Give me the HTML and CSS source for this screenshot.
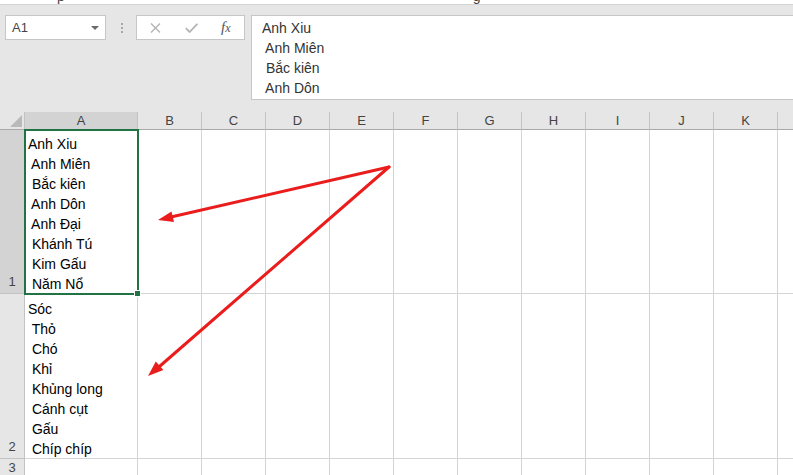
FILE: index.html
```html
<!DOCTYPE html>
<html lang="vi">
<head>
<meta charset="utf-8">
<title>Excel</title>
<link rel="stylesheet" href="styles.css">
</head>
<body>
<div class="topstrip"><div class="toptext"><span class="tp1">p</span><span class="tp2">g</span></div></div>

<div class="toolbar">
  <div class="namebox"><span>A1</span><span class="caret"></span></div>
  <div class="dots"><i></i><i></i><i></i></div>
  <div class="fxbox">
    <svg class="ic-x" width="11" height="10" viewBox="0 0 11 10"><path d="M1 0.5 L10 9.5 M10 0.5 L1 9.5" stroke="#b4b4b4" stroke-width="1.4" fill="none"/></svg>
    <svg class="ic-ok" width="13" height="10" viewBox="0 0 13 10"><path d="M0.8 5.2 L4.6 9 L12.4 0.8" stroke="#b4b4b4" stroke-width="1.8" fill="none"/></svg>
    <span class="fx">f<span class="fxx">x</span></span>
  </div>
  <div class="formula">
    <div class="ln">Anh Xiu</div>
    <div class="ln"> Anh Miên</div>
    <div class="ln"> Bắc kiên</div>
    <div class="ln"> Anh Dôn</div>
  </div>
</div>

<div class="sheet">
  <div class="hd corner"><svg width="24" height="17" viewBox="0 0 24 17"><polygon points="22,3 22,15 10,15" fill="#b9b9b9"/></svg></div>
  <div class="hd sel">A</div>
  <div class="hd">B</div>
  <div class="hd">C</div>
  <div class="hd">D</div>
  <div class="hd">E</div>
  <div class="hd">F</div>
  <div class="hd">G</div>
  <div class="hd">H</div>
  <div class="hd">I</div>
  <div class="hd">J</div>
  <div class="hd">K</div>
  <div class="hd"></div>

  <div class="rh r1 selrow">1</div>
  <div class="c r1 a1">
    <div class="ln">Anh Xiu</div>
    <div class="ln"> Anh Miên</div>
    <div class="ln"> Bắc kiên</div>
    <div class="ln"> Anh Dôn</div>
    <div class="ln"> Anh Đại</div>
    <div class="ln"> Khánh Tú</div>
    <div class="ln"> Kim Gấu</div>
    <div class="ln"> Năm Nổ</div>
    <span class="selbox"></span><span class="handle"></span>
  </div>
  <div class="c r1"></div><div class="c r1"></div><div class="c r1"></div><div class="c r1"></div><div class="c r1"></div><div class="c r1"></div><div class="c r1"></div><div class="c r1"></div><div class="c r1"></div><div class="c r1"></div><div class="c r1"></div>

  <div class="rh r2">2</div>
  <div class="c r2">
    <div class="ln">Sóc</div>
    <div class="ln"> Thỏ</div>
    <div class="ln"> Chó</div>
    <div class="ln"> Khỉ</div>
    <div class="ln"> Khủng long</div>
    <div class="ln"> Cánh cụt</div>
    <div class="ln"> Gấu</div>
    <div class="ln"> Chíp chíp</div>
  </div>
  <div class="c r2"></div><div class="c r2"></div><div class="c r2"></div><div class="c r2"></div><div class="c r2"></div><div class="c r2"></div><div class="c r2"></div><div class="c r2"></div><div class="c r2"></div><div class="c r2"></div><div class="c r2"></div>

  <div class="rh r3">3</div>
  <div class="c r3"></div><div class="c r3"></div><div class="c r3"></div><div class="c r3"></div><div class="c r3"></div><div class="c r3"></div><div class="c r3"></div><div class="c r3"></div><div class="c r3"></div><div class="c r3"></div><div class="c r3"></div><div class="c r3"></div>
</div>

<svg class="arrows" width="793" height="475" viewBox="0 0 793 475">
  <g stroke="#ea1c1c" stroke-width="3" stroke-linecap="round" fill="none">
    <line x1="389" y1="167" x2="171" y2="217"/>
    <line x1="389" y1="167" x2="160" y2="366"/>
  </g>
  <g fill="#ea1c1c">
    <polygon points="158,220 171.5,211.5 174,222"/>
    <polygon points="148,376 155.8,361.6 163.4,370.1"/>
  </g>
</svg>
</body>
</html>
```

FILE: styles.css
```css
html, body {
  margin: 0;
  padding: 0;
}
body {
  width: 793px;
  height: 475px;
  overflow: hidden;
  position: relative;
  background: #e6e6e6;
  font-family: "Liberation Sans", Arial, sans-serif;
}

.topstrip {
  height: 4px;
  background: #ffffff;
  border-bottom: 1px solid #d4d4d4;
  overflow: hidden;
}
.toptext {
  margin-top: -11px;
  font-size: 14px;
  line-height: 14px;
  color: #444;
  white-space: pre;
}
.tp1 { margin-left: 57px; }
.tp2 { margin-left: 408px; }

.toolbar {
  display: flex;
  align-items: flex-start;
  height: 107px;
  box-sizing: border-box;
  padding: 10px 0 0 5px;
}
.namebox {
  width: 101px;
  height: 25px;
  box-sizing: border-box;
  border: 1px solid #c6c6c6;
  background: #fff;
  display: flex;
  align-items: center;
  justify-content: space-between;
  padding: 0 6px 0 6px;
  font-size: 13px;
  color: #444;
}
.caret {
  width: 0;
  height: 0;
  border-left: 4px solid transparent;
  border-right: 4px solid transparent;
  border-top: 4px solid #6a6a6a;
  margin-top: 1px;
}
.dots {
  display: flex;
  flex-direction: column;
  gap: 2px;
  margin: 8px 0 0 15px;
}
.dots i {
  display: block;
  width: 2px;
  height: 2px;
  background: #a8a8a8;
}
.fxbox {
  width: 109px;
  height: 25px;
  box-sizing: border-box;
  margin-left: 13px;
  border: 1px solid #c6c6c6;
  background: #fff;
  display: flex;
  align-items: center;
  padding-left: 13px;
}
.ic-ok { margin-left: 24px; }
.fx {
  margin-left: 23px;
  font-family: "Liberation Serif", "Times New Roman", serif;
  font-style: italic;
  font-size: 15px;
  color: #555;
  line-height: 1;
}
.fxx { font-size: 12px; }

.formula {
  flex: 1;
  height: 85px;
  box-sizing: border-box;
  margin: 0 -4px 0 6px;
  border: 1px solid #c6c6c6;
  background: #fff;
  padding: 2px 0 0 10px;
  font-size: 14px;
  color: #333;
}
.ln {
  height: 20px;
  line-height: 20px;
  white-space: pre;
}

.sheet {
  display: grid;
  grid-template-columns: 25px 113px repeat(11, 64px);
  grid-template-rows: 18px 164px 165px 1fr;
  height: 363px;
  overflow: hidden;
  background: #fff;
}
.hd {
  box-sizing: border-box;
  background: #e6e6e6;
  border-right: 1px solid #c3c3c3;
  border-bottom: 1px solid #a9a9a9;
  font-size: 13px;
  color: #444;
  display: flex;
  align-items: center;
  justify-content: center;
}
.hd.sel { background: #d3d3d3; }
.corner { justify-content: flex-start; align-items: flex-start; }
.corner svg { display: block; }

.rh {
  box-sizing: border-box;
  background: #e6e6e6;
  border-right: 1px solid #c3c3c3;
  border-bottom: 1px solid #c3c3c3;
  font-size: 13px;
  color: #444;
  display: flex;
  flex-direction: column;
  justify-content: flex-end;
  align-items: center;
  line-height: 22px;
}
.rh.selrow { background: #d3d3d3; }
.rh.r3 { justify-content: flex-start; line-height: 17px; }

.c {
  box-sizing: border-box;
  border-right: 1px solid #d4d4d4;
  border-bottom: 1px solid #d4d4d4;
  display: flex;
  flex-direction: column;
  justify-content: flex-end;
  padding-left: 3px;
  font-size: 14px;
  color: #000;
  min-width: 0;
}
.c .ln { line-height: 22px; }
.a1 { position: relative; }
.selbox {
  position: absolute;
  left: -1px;
  top: -1px;
  right: -2px;
  bottom: -2px;
  border: 2px solid #217346;
}
.handle {
  position: absolute;
  right: -4px;
  bottom: -4px;
  width: 5px;
  height: 5px;
  background: #217346;
  border: 1px solid #fff;
}

.arrows {
  position: absolute;
  left: 0;
  top: 0;
  pointer-events: none;
}
```
